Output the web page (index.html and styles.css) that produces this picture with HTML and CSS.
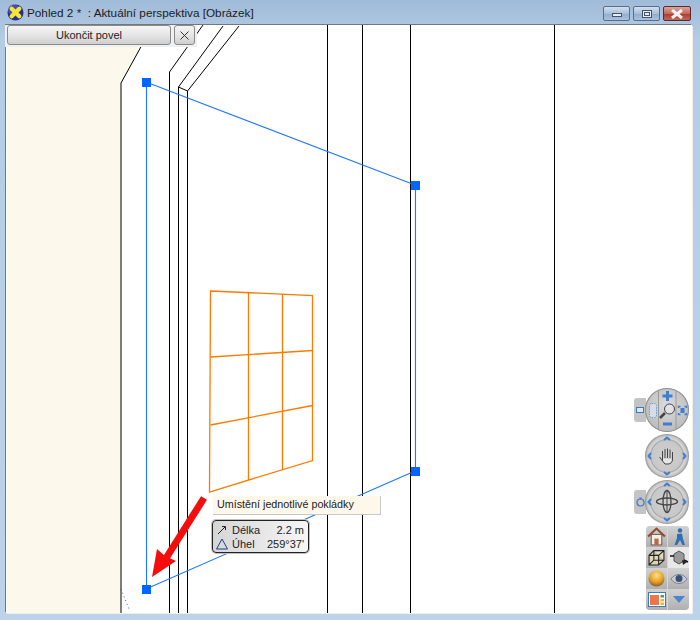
FILE: index.html
```html
<!DOCTYPE html>
<html lang="en">
<head>
    <meta charset="UTF-8">
    <title>Pohled 2</title>
    <link rel="stylesheet" href="styles.css">
</head>
<body>
    <div class="window">
        <div class="titlebar">
            <svg class="app-icon" width="17" height="17" viewBox="0 0 18 18">
                <circle cx="9" cy="9" r="8.500" fill="#2a2f8c"/>
                <circle cx="7" cy="6" r="6" fill="#6a70c8" opacity="0.5"/>
                <path d="M5 5 L13 13 M13 5 L5 13" stroke="#f5e63a" stroke-width="4.500" stroke-linecap="round"/>
            </svg>
            <span class="title">Pohled 2 * &nbsp;: Aktuální perspektiva [Obrázek]</span>
            <div class="win-buttons">
                <div class="win-btn"><span class="glyph-min"></span></div>
                <div class="win-btn"><span class="glyph-max"></span></div>
                <div class="win-btn close">
                    <svg width="14" height="10" viewBox="0 0 14 10"><path d="M2 1 L12 9 M12 1 L2 9" stroke="#f4f4f4" stroke-width="3"/></svg>
                </div>
            </div>
        </div>

        <div class="viewport">
            <!-- drawing, coordinates are viewport pixels -->
            <svg class="scene" width="686" height="588" viewBox="6 25 686 588">
                <polygon points="7,25 153,25 121,83 121,613 7,613" fill="#fdf8ec"/>

                <g class="walls">
                    <path d="M121 613 V83 L153 25"/>
                    <path d="M169.500 613 V72 L203 25"/>
                    <path d="M178.500 613 V87 L223 26"/>
                    <path d="M187.500 613 V91 L178.500 87"/>
                    <path d="M187.500 91 L239 26"/>
                    <path d="M327.500 25 V613"/>
                    <path d="M362.500 25 V613"/>
                    <path d="M410.500 25 V613"/>
                    <path d="M554.500 25 V613"/>
                </g>
                <path class="dots" d="M121 589 L129 609"/>

                <g class="blue">
                    <path d="M146.500 82 V589"/>
                    <path d="M146 82 L415 185"/>
                    <path d="M146 589 L415 471"/>
                    <path d="M415.500 185 V471"/>
                </g>
                <rect class="handle" x="142" y="78" width="9" height="9"/>
                <rect class="handle" x="411" y="181" width="9" height="9"/>
                <rect class="handle" x="411" y="467" width="9" height="9"/>
                <rect class="handle" x="142" y="585" width="9" height="9"/>

                <g class="orange">
                    <path d="M210.500 291 L312.500 295.500 V460.500 L209.500 492 Z" fill="none"/>
                    <path d="M248.500 293 V480"/>
                    <path d="M282.500 294 V470"/>
                    <path d="M210.500 357 L312.500 350.500"/>
                    <path d="M210.500 425 L312.500 405.500"/>
                </g>

                <path class="arrow" d="M204 498 L163 563"/>
                <polygon class="arrow-head" points="152,577 157,549 165,556 176,561"/>
            </svg>

            <div class="command-bar">
                <button class="cmd-btn end">Ukončit povel</button>
                <button class="cmd-btn cancel">
                    <svg width="11" height="11" viewBox="0 0 11 11"><path d="M1.500 1.500 L9.500 9.500 M9.500 1.500 L1.500 9.500" stroke="#333" stroke-width="1"/></svg>
                </button>
            </div>

            <div class="hint">Umístění jednotlivé pokládky</div>

            <div class="measure">
                <div class="measure-row">
                    <svg width="14" height="12" viewBox="0 0 14 12"><path d="M3 10 L10 3 M7 2.500 H10.500 V6" fill="none" stroke="#222" stroke-width="1"/></svg>
                    <span class="measure-label">Délka</span>
                    <span class="measure-value">2.2 m</span>
                </div>
                <div class="measure-row">
                    <svg width="14" height="12" viewBox="0 0 14 12"><path d="M7 1 L12.500 11 H1.500 Z" fill="none" stroke="#1d3f8f" stroke-width="1"/></svg>
                    <span class="measure-label">Úhel</span>
                    <span class="measure-value">259°37'</span>
                </div>
            </div>

            <div class="nav-tools">
                <div class="nav-row">
                    <div class="side-tab">
                        <svg width="8" height="8" viewBox="0 0 8 8"><rect x="0.500" y="1.500" width="7" height="5" fill="#dfe8f2" stroke="#3b78c4"/></svg>
                    </div>
                    <div class="dial zoom-dial">
                        <svg width="44" height="44" viewBox="0 0 44 44">
                            <path d="M13.500 0 V44 M31 0 V44" stroke="#9a9a9a" stroke-width="1"/>
                            <path d="M22.500 3 V13 M17.500 8 H27.500 M18 36 H27" stroke="#3f7fd0" stroke-width="3"/>
                            <rect x="4.500" y="15.500" width="7" height="14" rx="2" fill="#d6dde6" stroke="#6d9ad2" stroke-dasharray="1.500 1"/>
                            <path d="M20 25 L15 30" stroke="#444" stroke-width="2.500"/>
                            <circle cx="24.500" cy="21" r="5" fill="#e2e2e2" stroke="#444"/>
                            <path d="M33.500 20 V18.500 H35.500 M39.500 18.500 H41.500 V20 M41.500 25 V26.500 H39.500 M35.500 26.500 H33.500 V25" fill="none" stroke="#3f7fd0" stroke-width="1.500"/>
                            <rect x="35.500" y="20" width="4" height="5" fill="#3f7fd0"/>
                        </svg>
                    </div>
                </div>
                <div class="nav-row">
                    <div class="dial">
                        <svg width="44" height="44" viewBox="0 0 44 44">
                            <g class="chev"><path d="M19 6 L22 3.500 L25 6"/><path d="M19 38 L22 40.500 L25 38"/><path d="M6 19 L3.500 22 L6 25"/><path d="M38 19 L40.500 22 L38 25"/></g>
                            <path d="M16 25 L14.500 23 M17.500 27 V17 M20 24 V15 M22.500 24 V14.500 M25 24 V15.500 M27.500 25 V18 M27.500 25 C27.500 28 26 30 23 30 H20 L16 25" fill="#e6e6e6" stroke="#444" stroke-width="1"/>
                        </svg>
                    </div>
                </div>
                <div class="nav-row">
                    <div class="side-tab">
                        <svg width="9" height="10" viewBox="0 0 9 10"><circle cx="4.500" cy="5.500" r="3.500" fill="none" stroke="#3b78c4" stroke-width="1.200"/><path d="M3 0.500 H6 L4.500 2.500 Z" fill="#3b78c4"/></svg>
                    </div>
                    <div class="dial">
                        <svg width="44" height="44" viewBox="0 0 44 44">
                            <g class="chev"><path d="M19 6 L22 3.500 L25 6"/><path d="M19 38 L22 40.500 L25 38"/><path d="M6 19 L3.500 22 L6 25"/><path d="M38 19 L40.500 22 L38 25"/></g>
                            <ellipse cx="22" cy="21.500" rx="10.500" ry="3.500" fill="none" stroke="#444" stroke-width="1.300"/>
                            <ellipse cx="22" cy="21.500" rx="4" ry="11" fill="none" stroke="#444" stroke-width="1.300"/>
                            <path d="M22 10 V33" stroke="#444"/>
                        </svg>
                    </div>
                </div>
                <div class="tool-grid">
                    <div class="tool-cell">
                        <svg width="19" height="19" viewBox="0 0 18 18"><rect x="4" y="7" width="10" height="10" fill="#f6ede4" stroke="#7a5a4a"/><path d="M1 9 L9 1.500 L17 9" fill="none" stroke="#8e4a30" stroke-width="2"/><rect x="7" y="11" width="4" height="6" fill="#b46a4a"/></svg>
                    </div>
                    <div class="tool-cell">
                        <svg width="14" height="18" viewBox="0 0 14 18"><circle cx="8" cy="2.500" r="2.200" fill="#2f6fb5"/><path d="M5 6 L10 5.500 L11 11 L13 17 H10.500 L8 12 L5 17 H2.500 L5 10 Z" fill="#2f6fb5"/></svg>
                    </div>
                    <div class="tool-cell">
                        <svg width="17" height="17" viewBox="0 0 16 16"><path d="M1 6 H10 V15 H1 Z M1 6 L5.500 1.500 H15 V10.500 L10 15 M10 6 L15 1.500 M5.500 1.500 V10.500 H15 M1 15 L5.500 10.500" fill="#f7e9a8" fill-opacity="0.6" stroke="#222" stroke-width="1"/></svg>
                    </div>
                    <div class="tool-cell light">
                        <svg width="20" height="16" viewBox="0 0 20 16"><path d="M10 1 L15 4 V11 L10 14 L5 11 V4 Z" fill="#9a9a9a" stroke="#555"/><path d="M1 6 H5 M15 10 L19 12" stroke="#111" stroke-width="1.500"/><path d="M13 10 L18 12 L14 15 Z" fill="#222"/></svg>
                    </div>
                    <div class="tool-cell">
                        <svg width="17" height="17" viewBox="0 0 16 16"><defs><radialGradient id="ball" cx="0.500" cy="0.300" r="0.750"><stop offset="0" stop-color="#ffe27a"/><stop offset="0.600" stop-color="#e29a2c"/><stop offset="1" stop-color="#7a5020"/></radialGradient></defs><circle cx="8" cy="8" r="7.500" fill="url(#ball)"/></svg>
                    </div>
                    <div class="tool-cell">
                        <svg width="18" height="14" viewBox="0 0 18 14"><path d="M1 7 C5 1 13 1 17 7 C13 13 5 13 1 7 Z" fill="#c9ced6" stroke="#7c8290"/><circle cx="9" cy="6.500" r="3.500" fill="#3d4f78"/></svg>
                    </div>
                    <div class="tool-cell">
                        <svg width="18" height="15" viewBox="0 0 18 15"><rect x="0.500" y="0.500" width="17" height="14" fill="#fff" stroke="#2f7fc8"/><rect x="2" y="3" width="9" height="10" fill="#f0744a"/><rect x="12.500" y="3" width="3.500" height="2.500" fill="#3aa36a"/><rect x="12.500" y="7" width="3.500" height="2.500" fill="#e5b93a"/><rect x="12.500" y="10.500" width="3.500" height="2.500" fill="#e5b93a"/></svg>
                    </div>
                    <div class="tool-cell">
                        <svg width="12" height="7" viewBox="0 0 12 7"><path d="M0 0 H12 L6 7 Z" fill="#4a86cf"/></svg>
                    </div>
                </div>
            </div>
        </div>
    </div>
</body>
</html>
```

FILE: styles.css
```css
* {
    margin: 0;
    padding: 0;
    box-sizing: border-box;
    font-family: 'Liberation Sans', Arial, sans-serif;
}

body {
    width: 700px;
    height: 620px;
    overflow: hidden;
    background: #b9d1ea;
}

.window {
    width: 700px;
    height: 620px;
    padding: 0 8px 7px 6px;
    display: flex;
    flex-direction: column;
    background: linear-gradient(to bottom, #a0bbd8 0, #b4cce5 40px, #bcd3ea 100%);
}

/* title bar */
.titlebar {
    height: 25px;
    display: flex;
    align-items: center;
    flex-shrink: 0;
}

.app-icon {
    margin: 0 3px 0 1px;
}

.title {
    font-size: 11.750px;
    color: #1c1c1c;
    white-space: nowrap;
}

.win-buttons {
    margin-left: auto;
    margin-right: 1px;
    align-self: flex-start;
    margin-top: 6px;
    display: flex;
    gap: 3px;
}

.win-btn {
    width: 27px;
    height: 15px;
    border: 1px solid #5a6d88;
    border-radius: 2px;
    background: linear-gradient(to bottom, #d3e0ee 0, #a9c0da 50%, #8eaccd 51%, #a9c3df 100%);
    display: flex;
    align-items: center;
    justify-content: center;
}

.win-btn.close {
    width: 28px;
    border-color: #5e2630;
    background: linear-gradient(to bottom, #dfa59c 0, #c2685d 50%, #a83a2e 51%, #c06a58 100%);
}

.glyph-min {
    width: 10px;
    height: 4px;
    margin-top: 2px;
    background: #e8ecf2;
    border: 1px solid #45536b;
}

.glyph-max {
    width: 10px;
    height: 8px;
    background: #e8ecf2;
    border: 1px solid #45536b;
    box-shadow: inset 0 0 0 1px #e8ecf2, inset 0 0 0 2px #45536b;
}

/* drawing area */
.viewport {
    position: relative;
    width: 686px;
    height: 588px;
    background: #fff;
    box-shadow: -1px -1px 0 #777, 1px 1px 0 #f1efe6;
}

.scene {
    display: block;
    position: absolute;
    left: 0;
    top: 0;
}

.walls path {
    fill: none;
    stroke: #000;
    stroke-width: 1;
}

.dots {
    stroke: #555;
    stroke-width: 1;
    stroke-dasharray: 1 3;
}

.blue path {
    fill: none;
    stroke: #1e78ff;
    stroke-width: 1.100;
}

.handle {
    fill: #0066ff;
}

.orange path {
    stroke: #ff7a00;
    stroke-width: 1.300;
}

.arrow {
    stroke: #f50d0d;
    stroke-width: 7;
    fill: none;
}

.arrow-head {
    fill: #f50d0d;
}

/* overlays */
.command-bar {
    position: absolute;
    left: -1px;
    top: 0;
    width: 192px;
    height: 22px;
    padding-left: 2px;
    display: flex;
    gap: 3px;
    background: #eef0f1;
}

.cmd-btn {
    height: 20px;
    border: 1px solid #8a8a8a;
    border-radius: 3px;
    background: linear-gradient(to bottom, #f4f4f4 0, #e6e6e6 50%, #cfcfcf 100%);
    font-size: 11px;
    color: #222;
    display: flex;
    align-items: center;
    justify-content: center;
}

.cmd-btn.end {
    width: 164px;
}

.cmd-btn.cancel {
    width: 21px;
}

.hint {
    position: absolute;
    left: 207px;
    top: 471px;
    width: 168px;
    height: 19px;
    padding-left: 4px;
    background: #fdf8ea;
    border-right: 1px solid #c8c8c8;
    border-bottom: 1px solid #c8c8c8;
    font-size: 10.750px;
    line-height: 17px;
    color: #222;
    white-space: nowrap;
}

.measure {
    position: absolute;
    left: 206px;
    top: 495px;
    width: 97px;
    height: 33px;
    padding: 2px 4px 2px 2px;
    border: 1px solid #222;
    border-radius: 4px;
    background: linear-gradient(to right, #d6d6d6, #f6f6f6);
    box-shadow: 0 0 0 1px #c0c0c0;
}

.measure-row {
    height: 14px;
    display: flex;
    align-items: center;
    gap: 3px;
    font-size: 11px;
    color: #222;
}

.measure-value {
    margin-left: auto;
}

/* navigation widget */
.nav-tools {
    position: absolute;
    right: 3px;
    top: 363px;
    display: flex;
    flex-direction: column;
    align-items: flex-end;
    gap: 2px;
}

.nav-row {
    display: flex;
    align-items: center;
}

.dial {
    width: 44px;
    height: 44px;
    border-radius: 50%;
    overflow: hidden;
    background: radial-gradient(circle closest-side, #d0d0d0 0, #c8c8c8 70%, #a6a6a6 74%, #d8d8d8 80%, #c2c2c2 92%, #8a8a8a 100%);
}

.zoom-dial {
    background: radial-gradient(circle at 50% 40%, #dcdcdc, #b0b0b0);
    box-shadow: inset 0 0 0 1px #8f8f8f;
}

.dial svg {
    display: block;
}

.chev path {
    fill: none;
    stroke: #3f7fd0;
    stroke-width: 2;
}

.side-tab {
    width: 12px;
    height: 24px;
    margin-right: -1px;
    border-radius: 3px 0 0 3px;
    background: #c4c4c4;
    display: flex;
    align-items: center;
    justify-content: center;
}

.tool-grid {
    display: grid;
    grid-template-columns: 21px 21px;
    grid-auto-rows: 21px;
    border-radius: 4px;
    overflow: hidden;
    background: #d8d8d8;
    column-gap: 1px;
    width: 43px;
}

.tool-cell {
    display: flex;
    align-items: center;
    justify-content: center;
    background: linear-gradient(to bottom, #d2d2d2, #b0b0b0);
}

.tool-cell.light {
    background: #e8e8e8;
}
```
